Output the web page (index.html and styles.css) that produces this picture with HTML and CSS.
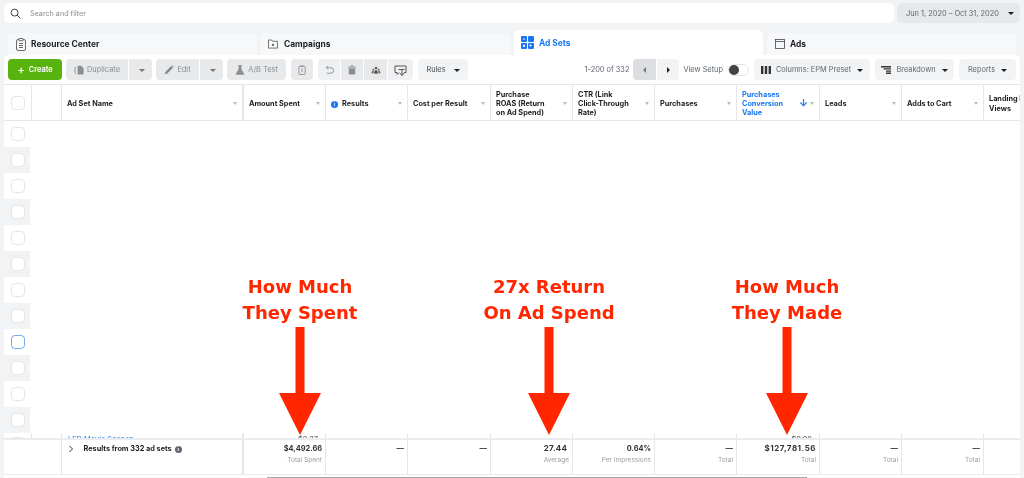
FILE: index.html
```html
<!DOCTYPE html>
<html lang="en">
<head>
<meta charset="utf-8">
<title>Ad Sets</title>
<link rel="stylesheet" href="styles.css">
</head>
<body>
<header class="top">
  <div class="search">
    <svg class="search-ic" viewBox="0 0 12 12"><circle cx="5" cy="5" r="3.800"/><path d="M7.800 7.800 11.300 11.300"/></svg>
    <span>Search and filter</span>
  </div>
  <button class="date"><span>Jun 1, 2020 – Oct 31, 2020</span><i class="caret dark"></i></button>
</header>

<nav class="tabs">
  <div class="tab">
    <svg class="tab-ic" viewBox="0 0 10 13"><rect x=".5" y="1.500" width="9" height="11" rx="1.500"/><rect x="2.800" y=".5" width="4.400" height="2.200" rx=".6" class="paper"/><path d="M3 5.500h4M3 7.500h4M3 9.500h4"/></svg>
    <span>Resource Center</span>
  </div>
  <div class="tab t-camp">
    <svg class="tab-ic wide" viewBox="0 0 11 10"><path d="M.5.6h3.600l1 1.400h5.400v7.500H.5z"/><path class="solid" d="M5.500 4.200 7 7H4z"/></svg>
    <span>Campaigns</span>
  </div>
  <div class="tab active">
    <svg class="tab-ic big" viewBox="0 0 13 13"><rect x="0" y="0" width="6" height="6" rx="1"/><rect x="7" y="0" width="6" height="6" rx="1"/><rect x="0" y="7" width="6" height="6" rx="1"/><rect x="7" y="7" width="6" height="6" rx="1"/><circle class="hole" cx="9.500" cy="9.500" r="1.100"/><rect class="hole" x="2" y="8.800" width="2" height="2"/><circle class="hole" cx="3" cy="3" r=".8"/></svg>
    <span>Ad Sets</span>
  </div>
  <div class="tab">
    <svg class="tab-ic wide" viewBox="0 0 10 10"><rect x=".5" y=".5" width="9" height="9"/><path d="M.5 2.500h9"/></svg>
    <span>Ads</span>
  </div>
</nav>

<main class="panel">
  <div class="toolbar">
    <button class="btn create"><b>+</b> Create</button>
    <div class="split w-dup">
      <button class="btn off fill"><svg class="ic" viewBox="0 0 11 11"><path class="solid" d="M4 .8h3.800L10.500 3.500v7H4z"/><path d="M2 2c-1.300 2.200-1.300 5 0 7.500"/></svg>Duplicate</button>
      <button class="btn off cbtn"><i class="caret"></i></button>
    </div>
    <div class="split w-edit">
      <button class="btn off fill"><svg class="ic" viewBox="0 0 11 11"><path class="solid" d="M.8 10.200l.6-2.600L7.800 1.200l2 2-6.400 6.400zM8.300.7l.7-.5 1.800 1.800-.5.7z"/></svg>Edit</button>
      <button class="btn off cbtn"><i class="caret"></i></button>
    </div>
    <button class="btn off w-ab"><svg class="ic" viewBox="0 0 11 11"><path class="solid" d="M4 1.200h3v3.300l3 5.500a.5.5 0 0 1-.4.8H1.400a.5.5 0 0 1-.4-.8l3-5.500z"/><path d="M3.200.7h4.600"/></svg>A/B Test</button>
    <button class="btn off sq"><svg class="ic" viewBox="0 0 11 11"><rect x="2" y="1.500" width="7" height="9" rx="1"/><path class="thin" d="M3.800 1h3.400M5.500 4v4"/></svg></button>
    <div class="group">
      <button class="btn off sq soft"><svg class="ic" viewBox="0 0 11 11"><path d="M2.500 3h5a2.800 2.800 0 0 1 0 6H3M2.500 3l2-2M2.500 3l2 2"/></svg></button>
      <button class="btn off sq"><svg class="ic" viewBox="0 0 11 11"><path class="solid" d="M2 3.500h7v7H2z"/><path d="M1 2.300h9M3.800 1h3.400"/></svg></button>
      <button class="btn off sq"><svg class="ic dk" viewBox="0 0 12 11"><circle class="solid" cx="6" cy="3" r="1.500"/><circle class="solid" cx="2.800" cy="5" r="1.100"/><circle class="solid" cx="9.200" cy="5" r="1.100"/><path class="solid" d="M3.800 10c0-3 .7-4.400 2.200-4.400S8.200 7 8.200 10zM.8 9.500c0-1.500.5-3 1.900-3l.6.300L2.800 9.500zM11.200 9.500c0-1.500-.5-3-1.900-3l-.6.300.5 2.700z"/></svg></button>
      <button class="btn off sq soft"><svg class="ic dk wider" viewBox="0 0 13 11"><path d="M3 7.500H1V1h11v6.500h-2M3 7.500v2l2-2"/><path d="M8 4.500v6M5.800 8 8 10.500 10.200 8M4.500 4.500h6"/></svg></button>
    </div>
    <button class="btn lite rules">Rules<i class="caret dark"></i></button>
    <div class="right">
      <span class="count">1-200 of 332</span>
      <div class="pager">
        <button class="btn page prev"><i class="tri left"></i></button>
        <button class="btn page next"><i class="tri"></i></button>
      </div>
      <span class="setup">View Setup</span>
      <span class="toggle"><i></i></span>
      <button class="btn lite w-cols"><svg class="ic cols" viewBox="0 0 10 8"><path d="M0 0h2.400v8H0zM3.800 0h2.400v8H3.800zM7.600 0H10v8H7.600z"/></svg>Columns: EPM Preset<i class="caret dark"></i></button>
      <button class="btn lite w-break"><svg class="ic cols" viewBox="0 0 10 8"><path d="M0 0h10v1.400H0zM2.500 2.200H10v1.400H2.500zM5 4.400h5v1.400H5zM5 6.600h5V8H5z"/></svg>Breakdown<i class="caret dark"></i></button>
      <button class="btn lite w-rep">Reports<i class="caret dark"></i></button>
    </div>
  </div>

  <div class="table">
    <div class="row head">
      <div class="cell"><span class="check"></span></div>
      <div class="cell"></div>
      <div class="cell thick sort"><span>Ad Set Name</span></div>
      <div class="cell sort"><span>Amount Spent</span></div>
      <div class="cell sort"><span><i class="info">i</i>Results</span></div>
      <div class="cell sort"><span>Cost per Result</span></div>
      <div class="cell sort"><span>Purchase<br>ROAS (Return<br>on Ad Spend)</span></div>
      <div class="cell sort"><span>CTR (Link<br>Click-Through<br>Rate)</span></div>
      <div class="cell sort"><span>Purchases</span></div>
      <div class="cell sort on"><span>Purchases<br>Conversion<br>Value</span><em>↓</em></div>
      <div class="cell sort"><span>Leads</span></div>
      <div class="cell sort"><span>Adds to Cart</span></div>
      <div class="cell last"><span>Landing Page<br>Views</span></div>
    </div>

    <div class="body">
      <div class="pick"><span class="check"></span></div>
      <div class="pick alt"><span class="check"></span></div>
      <div class="pick"><span class="check"></span></div>
      <div class="pick alt"><span class="check"></span></div>
      <div class="pick"><span class="check"></span></div>
      <div class="pick alt"><span class="check"></span></div>
      <div class="pick"><span class="check"></span></div>
      <div class="pick alt"><span class="check"></span></div>
      <div class="pick"><span class="check focus"></span></div>
      <div class="pick alt"><span class="check"></span></div>
      <div class="pick"><span class="check"></span></div>
      <div class="pick alt"><span class="check"></span></div>
      <div class="row peek">
        <div class="cell"><span class="check"></span></div>
        <div class="cell"></div>
        <div class="cell thick name">LED Movie Scenes</div>
        <div class="cell num">$2.37</div>
        <div class="cell"></div>
        <div class="cell"></div>
        <div class="cell"></div>
        <div class="cell"></div>
        <div class="cell"></div>
        <div class="cell num">$0.00</div>
        <div class="cell"></div>
        <div class="cell"></div>
        <div class="cell"></div>
      </div>
    </div>

    <div class="row foot">
      <div class="cell none span2"></div>
      <div class="cell thick label"><svg class="chev" viewBox="0 0 6 8"><path d="M1.500 1 4.500 4 1.500 7"/></svg><strong>Results from 332 ad sets</strong><i class="info gray">i</i></div>
      <div class="cell total"><strong>$4,492.66</strong><small>Total Spent</small></div>
      <div class="cell total"><strong>—</strong></div>
      <div class="cell total"><strong>—</strong></div>
      <div class="cell total avg"><strong>27.44</strong><small>Average</small></div>
      <div class="cell total"><strong>0.64%</strong><small>Per Impressions</small></div>
      <div class="cell total"><strong>—</strong><small>Total</small></div>
      <div class="cell total value"><strong>$127,781.56</strong><small>Total</small></div>
      <div class="cell total"><strong>—</strong><small>Total</small></div>
      <div class="cell total"><strong>—</strong><small>Total</small></div>
      <div class="cell total"></div>
    </div>
  </div>
  <div class="scrolltrack"><div class="scrollbar"></div></div>
</main>

<div class="note spent">
  <p>How Much<br>They Spent</p>
  <svg viewBox="0 0 42 108"><path d="M16.500 0h9v66H42L21 108 0 66h16.500z"/></svg>
</div>
<div class="note roas">
  <p>27x Return<br>On Ad Spend</p>
  <svg viewBox="0 0 42 108"><path d="M16.500 0h9v66H42L21 108 0 66h16.500z"/></svg>
</div>
<div class="note made">
  <p>How Much<br>They Made</p>
  <svg viewBox="0 0 42 108"><path d="M16.500 0h9v66H42L21 108 0 66h16.500z"/></svg>
</div>
</body>
</html>
```

FILE: styles.css
```css
* { box-sizing: border-box; }
html, body { margin: 0; height: 478px; overflow: hidden; }
html { background: #f2f3f5; }
body {
  width: 1024px;
  position: relative;
  background: #f2f3f5;
  color: #1c1e21;
  font: 7.400px/10px Inter, "Liberation Sans", sans-serif;
  filter: blur(.3px);
}
button { font: inherit; color: inherit; border: 0; padding: 0; margin: 0; }

/* top bar */
.top { display: flex; gap: 3px; padding: 3px 4px 0; height: 23px; }
.search {
  flex: 1; display: flex; align-items: center; gap: 9px;
  padding: 1px 0 0 6px; background: #fff; border-radius: 5px; color: #8a8d91; font-size: 7.200px;
}
.search-ic { width: 11px; height: 11px; fill: none; stroke: #333; stroke-width: 1; }
.date {
  width: 123px; display: flex; align-items: center; justify-content: space-between;
  padding: 1px 6px 0 9px; background: #e6e8eb; border-radius: 5px; color: #606770;
}

/* tabs */
.tabs { display: flex; align-items: flex-end; gap: 4px; padding: 7px 8px 0; height: 32px; }
.tab {
  width: 249px; height: 22px; padding-left: 8px; display: flex; align-items: center; gap: 5px;
  background: #f7f8f9; border-radius: 5px 5px 0 0; font-size: 8.400px; font-weight: 700;
}
.tab.t-camp { padding-left: 7px; gap: 6px; }
.tab.active { height: 25px; background: #fff; color: #1877f2; padding-left: 7px; }
.tab-ic { width: 10px; height: 13px; fill: none; stroke: #444; stroke-width: .8; flex: none; }
.tab-ic.wide { width: 10px; height: 10px; }
.tab-ic .solid { fill: #444; stroke: none; }
.tab-ic .paper { fill: #f7f8f9; }
.tab-ic.big { width: 13px; height: 13px; fill: #1877f2; stroke: none; }
.tab-ic .hole { fill: #fff; }

/* panel + toolbar */
.panel { margin: 0 4px; height: 423px; background: #fff; border-radius: 5px 5px 0 0; overflow: hidden; display: flex; flex-direction: column; }
.toolbar { display: flex; align-items: center; padding: 4px 0 4px 4px; height: 29px; flex: none; }
.btn {
  height: 21px; display: flex; align-items: center; justify-content: center; gap: 3px;
  padding-top: 1px; border-radius: 4px; background: #e8e9eb; color: #8a8d91; white-space: nowrap;
}
.btn.lite { background: #f2f3f5; color: #606770; }
.btn.create { width: 54px; background: #58b30f; color: #fff; font-weight: 600; gap: 4px; }
.create b { font-size: 11px; font-weight: 500; }
.split { display: flex; gap: 1px; margin-left: 4px; }
.fill { flex: 1; border-radius: 4px 0 0 4px; }
.cbtn { width: 23px; border-radius: 0 4px 4px 0; }
.w-dup { width: 86px; }
.w-edit { width: 67px; }
.w-ab { width: 59px; margin-left: 4px; }
.btn.sq { width: 22px; margin-left: 5px; }
.group { display: flex; gap: 1px; margin-left: 5px; }
.group .sq { margin: 0; border-radius: 0; }
.group .soft { background: #eff0f2; }
.group .sq:first-child { border-radius: 4px 0 0 4px; }
.group .sq:nth-child(3) { width: 23px; }
.group .sq:last-child { width: 25px; border-radius: 0 4px 4px 0; }
.btn.rules { width: 50px; margin-left: 5px; color: #4b4f56; gap: 5px; }
.ic { width: 10px; height: 10px; fill: none; stroke: #8a8d91; stroke-width: 1; flex: none; }
.ic .solid { fill: #8a8d91; stroke: none; }
.ic.dk { stroke: #555; }
.ic.dk .solid { fill: #555; }
.ic.wider { width: 13px; height: 11px; }
.ic.cols { fill: #333; stroke: none; width: 10px; height: 8px; margin-right: 2px; }
.caret { display: block; width: 0; height: 0; border: 3px solid transparent; border-top: 3.500px solid #777; border-bottom: 0; margin-left: 3px; }
.caret.dark { border-top-color: #1c1e21; }
.right { margin-left: auto; display: flex; align-items: center; }
.count { color: #606770; margin-right: 4px; }
.pager { display: flex; gap: 1px; }
.page { width: 22.500px; }
.btn.prev { background: #dcdee1; border-radius: 4px 0 0 4px; }
.btn.next { border-radius: 0 4px 4px 0; background: #f2f3f5; }
.tri { width: 0; height: 0; border: 3px solid transparent; border-left: 3.500px solid #222; border-right: 0; }
.tri.left { border-left: 0; border-right: 3.500px solid #777; }
.setup { color: #606770; margin: 0 5px 0 4px; }
.toggle { width: 21px; height: 12px; border: 1px solid #e4e6e9; border-radius: 6px; display: flex; align-items: center; }
.toggle i { width: 10px; height: 10px; background: #444; border-radius: 50%; }
.w-cols { width: 116px; margin-left: 5px; }
.w-break { width: 79px; margin-left: 5px; }
.w-rep { width: 57px; margin-left: 5px; margin-right: 4px; }

/* table */
.table { flex: none; border-top: 1px solid #e4e6e9; width: 1016px; overflow: hidden; }
.row { display: grid; grid-template-columns: 28px 30px 182px 82px 82px 83px 82px 82px 82px 83px 82px 82px 82px; }
.cell { border-right: 1px solid #e4e6e9; min-width: 0; }
.cell.thick { border-right-width: 2px; }
.head { height: 36px; border-bottom: 1px solid #e4e6e9; font-weight: 700; font-size: 7.300px; line-height: 9.200px; }
.head .cell { display: flex; align-items: center; padding: 2px 0 0 5px; }
.head .last { white-space: nowrap; overflow: hidden; }
.head .sort { padding-right: 14px; position: relative; }
.head .sort::after { content: ""; position: absolute; right: 5px; top: 17px; border: 2.500px solid transparent; border-top: 3px solid #bbb; border-bottom: 0; }
.on { color: #1877f2; }
.on em { position: absolute; right: 11px; font-style: normal; font-size: 10px; }
.info { display: inline-flex; align-items: center; justify-content: center; width: 7px; height: 7px; margin-right: 4px; border-radius: 50%; background: #1877f2; color: #fff; font: 700 5px/7px Inter, sans-serif; font-style: normal; }
.info.gray { background: #606770; margin: 0 0 0 3px; }
.check { display: block; width: 14px; height: 14px; background: #fff; border: 1px solid #e4e6e9; border-radius: 4px; }
.check.focus { border-color: #7ba7ee; }
.head .cell .check { margin-left: 2px; margin-top: -2px; }
.body { height: 317px; overflow: hidden; }
.pick { width: 26px; height: 26px; padding: 6px 0 0 7px; }
.pick.alt { background: #f2f3f5; }
.peek { height: 26px; }
.peek .check { margin: 4px 0 0 7px; }
.name { color: #1877f2; padding-left: 6px; padding-top: 2px; }
.num { color: #444; text-align: right; padding: 2px 7px 0 0; }
.foot { height: 37px; border-top: 2px solid #e9ebee; border-bottom: 1px solid #e9ebee; }
.foot .cell { padding-top: 4px; }
.span2 { grid-column: span 2; }
.label { display: flex; align-items: flex-start; padding-left: 5.500px; font-weight: 700; }
.chev { width: 6px; height: 8px; margin: 1px 10px 0 0; fill: none; stroke: #333; stroke-width: 1; flex: none; }
.label .info { margin-top: 1.500px; }
.label strong { font-weight: 700; font-size: 7.300px; white-space: nowrap; }
.total { text-align: right; padding-right: 3px; display: flex; flex-direction: column; gap: 1px; }
.total strong { font-weight: 700; color: #333; }
.total small { font-size: 6.500px; color: #9a9da1; }
.avg strong, .value strong { margin: -1px 0 1px; }
.avg strong { margin-right: 2px; font-size: 8px; letter-spacing: .2px; }
.value strong { letter-spacing: .5px; font-size: 8px; }
.scrolltrack { flex: 1; }
.scrollbar { margin: 2px 0 0 263px; width: 540px; height: 2px; background: #aaa; }

/* annotations over the table */
.note { position: absolute; top: 274px; width: 160px; display: flex; flex-direction: column; align-items: center; }
.note p { margin: 0; color: #ff2600; font: 700 18px/26px "DejaVu Sans", sans-serif; text-align: center; }
.note svg { width: 42px; height: 108px; fill: #ff2600; margin-top: 1px; }
.spent { left: 220px; }
.roas { left: 469px; }
.made { left: 707px; }
```
